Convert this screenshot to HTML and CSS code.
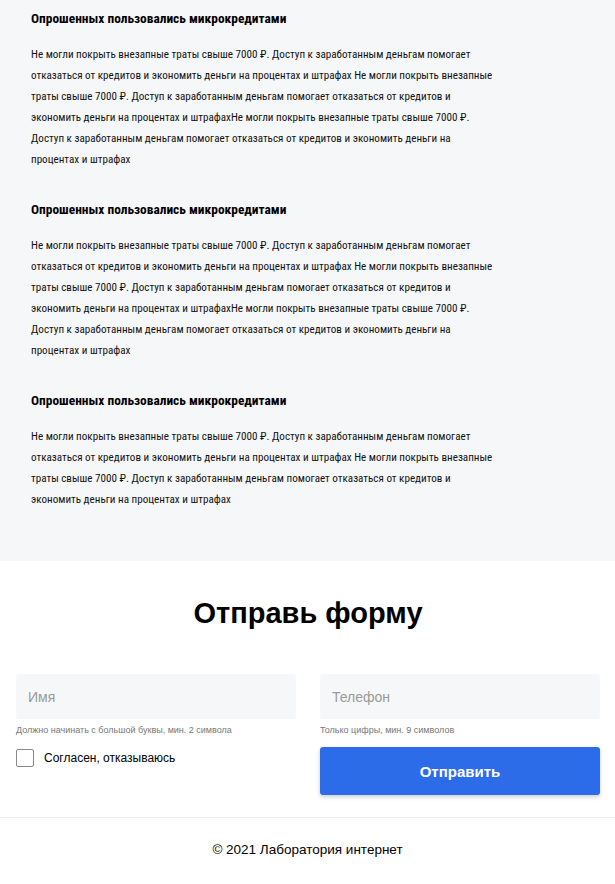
FILE: index.html
```html
<!DOCTYPE html>
<html lang="ru">
<head>
<meta charset="utf-8">
<title>Форма</title>
<link rel="stylesheet" href="styles.css">
</head>
<body>
<section class="facts">
  <div class="fact">
    <h3 class="fact-title">Опрошенных пользовались микрокредитами</h3>
    <p class="fact-text">Не могли покрыть внезапные траты свыше 7000 ₽. Доступ к заработанным деньгам помогает отказаться от кредитов и экономить деньги на процентах и штрафах Не могли покрыть внезапные траты свыше 7000 ₽. Доступ к заработанным деньгам помогает отказаться от кредитов и экономить деньги на процентах и штрафахНе могли покрыть внезапные траты свыше 7000 ₽. Доступ к заработанным деньгам помогает отказаться от кредитов и экономить деньги на процентах и штрафах</p>
  </div>
  <div class="fact">
    <h3 class="fact-title">Опрошенных пользовались микрокредитами</h3>
    <p class="fact-text">Не могли покрыть внезапные траты свыше 7000 ₽. Доступ к заработанным деньгам помогает отказаться от кредитов и экономить деньги на процентах и штрафах Не могли покрыть внезапные траты свыше 7000 ₽. Доступ к заработанным деньгам помогает отказаться от кредитов и экономить деньги на процентах и штрафахНе могли покрыть внезапные траты свыше 7000 ₽. Доступ к заработанным деньгам помогает отказаться от кредитов и экономить деньги на процентах и штрафах</p>
  </div>
  <div class="fact">
    <h3 class="fact-title">Опрошенных пользовались микрокредитами</h3>
    <p class="fact-text">Не могли покрыть внезапные траты свыше 7000 ₽. Доступ к заработанным деньгам помогает отказаться от кредитов и экономить деньги на процентах и штрафах Не могли покрыть внезапные траты свыше 7000 ₽. Доступ к заработанным деньгам помогает отказаться от кредитов и экономить деньги на процентах и штрафах</p>
  </div>
</section>
<section class="form-section">
  <h2 class="form-title">Отправь форму</h2>
  <form class="form">
    <div class="field">
      <input class="input" type="text" placeholder="Имя">
      <span class="hint">Должно начинать с большой буквы, мин. 2 символа</span>
    </div>
    <div class="field">
      <input class="input" type="text" placeholder="Телефон">
      <span class="hint">Только цифры, мин. 9 символов</span>
    </div>
    <label class="agree"><span class="checkbox"></span><span class="agree-text">Согласен, отказываюсь</span></label>
    <button class="submit" type="button">Отправить</button>
  </form>
</section>
<footer class="footer">© 2021 Лаборатория интернет</footer>
</body>
</html>
```
FILE: styles.css
```css
* { box-sizing: border-box; }
body {
  margin: 0;
  font-family: "Liberation Sans", Arial, sans-serif;
  color: #000;
  background: #fff;
}
.facts {
  background: #f6f7f9;
  padding: 10px 31px 51px;
  font-family: Roboto, "Liberation Sans", sans-serif;
  font-stretch: condensed;
}
.fact { margin-bottom: 31px; }
.fact:last-child { margin-bottom: 0; }
.fact-title {
  margin: 0;
  font-size: 13.4px;
  font-weight: 700;
  line-height: 17px;
}
.fact-text {
  margin: 17px 0 0;
  font-size: 11.1px;
  line-height: 21px;
  max-width: 464px;
  color: #111;
}
.form-section {
  padding: 31px 15px 22px 16px;
}
.form-title {
  margin: 0;
  text-align: center;
  font-size: 29px;
  font-weight: 700;
  line-height: 42px;
}
.form {
  margin-top: 40px;
  display: grid;
  grid-template-columns: 1fr 1fr;
  column-gap: 24px;
  row-gap: 11px;
}
.field { display: flex; flex-direction: column; }
.input {
  height: 45px;
  border: none;
  border-radius: 3px;
  background: #f6f7f9;
  padding: 0 12px;
  font-family: "Liberation Sans", Arial, sans-serif;
  font-size: 14px;
  color: #000;
}
.input::placeholder { color: #9a9a9a; }
.hint {
  margin-top: 5px;
  font-size: 9px;
  color: #777;
  line-height: 12px;
}
.agree {
  display: flex;
  align-items: center;
  gap: 10px;
  align-self: start;
  margin-top: 2px;
}
.checkbox {
  width: 18px;
  height: 18px;
  border: 1px solid #8a8a8a;
  border-radius: 2px;
  background: #fff;
}
.agree-text { font-size: 12px; }
.submit {
  height: 48px;
  border: none;
  border-radius: 3px;
  background: #2d6ce8;
  color: #fff;
  font-family: "Liberation Sans", Arial, sans-serif;
  font-size: 15px;
  font-weight: 700;
  box-shadow: 0 2px 4px rgba(0,0,0,0.2);
}
.footer {
  border-top: 1px solid #eeeeee;
  text-align: center;
  font-family: "Liberation Sans", Arial, sans-serif;
  font-size: 13.5px;
  padding: 24px 0 25px;
}
```
